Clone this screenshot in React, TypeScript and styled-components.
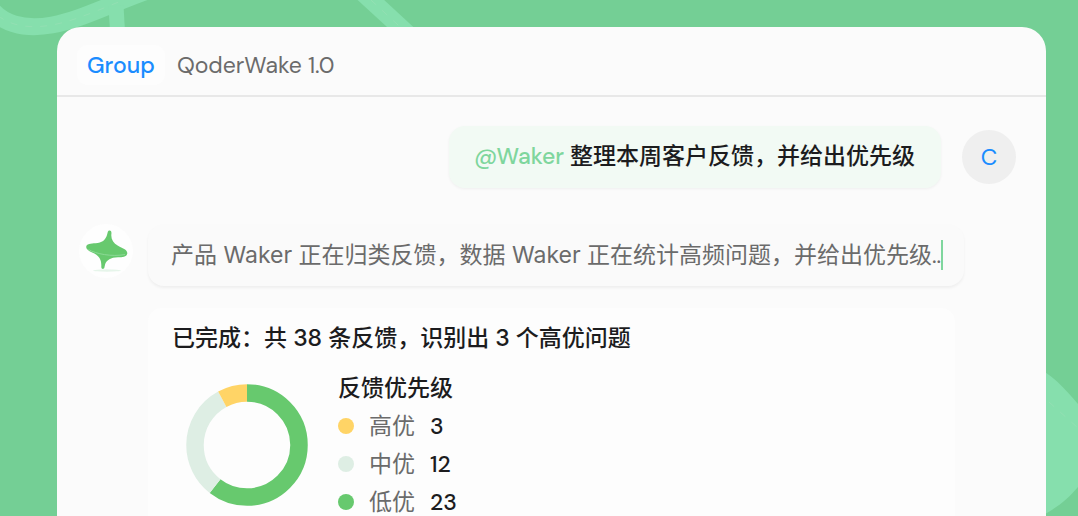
import React from "react";
import styled, { createGlobalStyle } from "styled-components";

const GlobalStyle = createGlobalStyle`
  *, *::before, *::after { box-sizing: border-box; }
  body {
    margin: 0;
    background: #74cf95;
    font-family: "DM Sans", Inter, "Noto Sans CJK SC", sans-serif;
    font-size: 23px;
    line-height: 32px;
    color: #1c1c1e;
  }
  h2, h3, p, ul { margin: 0; padding: 0; font-size: inherit; }
`;

const Page = styled.div`
  position: relative;
  display: flex;
  height: 100vh;
  padding: 27px 32px 0 57px;
  overflow: hidden;
`;

const Roads = styled.svg`
  position: absolute;
  top: 0;
  width: 440px;
  height: 516px;
  pointer-events: none;
`;

const RoadsLeft = styled(Roads)`
  left: 0;
`;

const RoadsRight = styled(Roads)`
  right: 0;
  width: 78px;
`;

const Panel = styled.main`
  position: relative;
  flex: 1;
  min-width: 0;
  background: #fbfbfb;
  border-radius: 24px 24px 0 0;
`;

const Header = styled.header`
  display: flex;
  align-items: center;
  gap: 12px;
  height: 70px;
  padding: 8px 20px 0;
  border-bottom: 2px solid #e8e8e8;
`;

const Tab = styled.button<{ $active?: boolean }>`
  padding: 4px ${(p) => (p.$active ? 10 : 0)}px;
  border: 0;
  border-radius: 10px;
  background: ${(p) => (p.$active ? "#fdfdfd" : "transparent")};
  color: ${(p) => (p.$active ? "#1a8cff" : "#6b6b6b")};
  font-family: inherit;
  font-size: 23px;
  font-weight: ${(p) => (p.$active ? 500 : 400)};
  line-height: 32px;
`;

const Thread = styled.section`
  display: flex;
  flex-direction: column;
  padding: 29px 30px 0 22px;
`;

const UserRow = styled.div`
  display: flex;
  justify-content: flex-end;
  align-items: center;
  gap: 21px;
`;

const UserBubble = styled.p`
  padding: 14px 26px 16px 25px;
  border-radius: 16px;
  background: #f2faf4;
  box-shadow: 0 1px 3px rgba(0, 0, 0, 0.05);
  font-weight: 500;
  white-space: nowrap;
`;

const Mention = styled.span`
  color: #7fd69d;
`;

const Avatar = styled.div<{ $bg: string }>`
  display: flex;
  flex: none;
  align-items: center;
  justify-content: center;
  width: 54px;
  height: 54px;
  border-radius: 50%;
  background: ${(p) => p.$bg};
  color: #1a8cff;
`;

const AgentRow = styled.div`
  display: flex;
  align-items: flex-start;
  gap: 15px;
  margin-top: 36px;
`;

const AgentColumn = styled.div`
  display: flex;
  flex: 1;
  flex-direction: column;
  align-items: flex-start;
  gap: 22px;
  min-width: 0;
`;

const Reply = styled.p`
  display: flex;
  align-items: center;
  padding: 15px 21px 15px 23px;
  border-radius: 16px;
  background: #fafafa;
  box-shadow: 0 2px 3px rgba(0, 0, 0, 0.05);
  color: #6b6b6b;
  font-family: Inter, "Noto Sans CJK SC", sans-serif;
  white-space: nowrap;
`;

const TypingDots = styled.span`
  font-family: "DM Sans", Inter, sans-serif;
`;

const Caret = styled.span`
  width: 2px;
  height: 30px;
  background: #7fd69d;
`;

const Card = styled.article`
  align-self: stretch;
  margin-right: 61px;
  padding: 14px 24px 24px;
  border-radius: 14px;
  background: #fdfdfd;
`;

const CardTitle = styled.h2`
  font-family: Inter, "Noto Sans CJK SC", sans-serif;
  font-weight: 500;
  white-space: nowrap;
`;

const Summary = styled.div`
  display: flex;
  align-items: flex-start;
  gap: 30px;
  margin-top: 15px;
  padding-left: 14px;
`;

const Donut = styled.svg`
  flex: none;
  width: 122px;
  height: 122px;
  margin-top: 15px;
`;

const LegendTitle = styled.h3`
  font-weight: 500;
  line-height: 38px;
`;

const Legend = styled.ul`
  list-style: none;
`;

const LegendItem = styled.li`
  display: flex;
  align-items: center;
  gap: 15px;
  line-height: 38px;
  color: #6b6b6b;
`;

const Dot = styled.span<{ $color: string }>`
  width: 16px;
  height: 16px;
  border-radius: 50%;
  background: ${(p) => p.$color};
`;

const Count = styled.span`
  color: #1c1c1e;
  font-weight: 500;
`;

const priorities = [
  { label: "高优", count: 3, color: "#ffd466" },
  { label: "中优", count: 12, color: "#deeee4" },
  { label: "低优", count: 23, color: "#67c96e" },
];

function PriorityDonut() {
  const total = priorities.reduce((sum, p) => sum + p.count, 0);
  let start = 0;
  const arcs = [...priorities].reverse().map((p) => {
    const arc = { ...p, start };
    start += p.count;
    return arc;
  });
  return (
    <Donut viewBox="0 0 122 122" role="img" aria-label="反馈优先级">
      {arcs.map((a) => (
        <circle
          key={a.label}
          cx="61"
          cy="61"
          r="52"
          fill="none"
          stroke={a.color}
          strokeWidth="17.5"
          pathLength={total}
          strokeDasharray={`${a.count} ${total - a.count}`}
          strokeDashoffset={-a.start}
          transform="rotate(-90 61 61)"
        />
      ))}
    </Donut>
  );
}

function SpinningTop() {
  return (
    <svg width="54" height="54" viewBox="0 0 54 54" aria-hidden="true">
      <ellipse cx="28" cy="46.500" rx="14" ry="1.200" fill="#e6f5ea" />
      <path
        d="M30.500 6.500C32.300 6.500 32.600 8 32.400 9.800C31.800 15 34 18.500 39 21.800C42 23.800 48.200 25.200 48.300 29C48.300 32.500 44 33.300 39 33.300C31.500 33.500 28 36 26.200 40L25.400 43.500C25 45.600 22.300 45.400 22.300 43C22.500 38.500 22 34 17 30.500C13 28 7.200 26.500 7.200 23C7.200 19.800 12 19.500 16.500 19.300C23 19 26.500 16 28 11L28.700 8.300C29 7 29.600 6.500 30.500 6.500Z"
        fill="#67c96e"
      />
      <path d="M9.500 25.500C17 30 33 33 46 30.500" fill="none" stroke="#8bd995" strokeWidth="1" />
    </svg>
  );
}

export default function App() {
  return (
    <>
      <GlobalStyle />
      <Page>
        <RoadsLeft viewBox="0 0 440 516" aria-hidden="true">
          <g fill="none" stroke="#86dfad" strokeWidth="17">
            <path d="M-12 4C0 24 24 30 52 25C80 20 108 5 150 -10" />
            <path d="M116 6L118 40" strokeWidth="15" />
            <path d="M360 -10L410 36" strokeWidth="18" />
          </g>
          <g fill="none" stroke="#93e0b3" strokeWidth="1" strokeDasharray="7 8">
            <path d="M-12 4C0 24 24 30 52 25C80 20 108 5 150 -10" />
            <path d="M360 -10L410 36" />
          </g>
        </RoadsLeft>
        <RoadsRight viewBox="0 0 78 516" aria-hidden="true">
          <path d="M30 364C52 373 65 389 78 404V487C66 501 56 509 30 522Z" fill="#86dfad" />
          <path d="M49 402L78 428" fill="none" stroke="#93e0b3" strokeDasharray="7 8" />
        </RoadsRight>
        <Panel>
          <Header>
            <Tab type="button" $active>Group</Tab>
            <Tab type="button">QoderWake 1.0</Tab>
          </Header>
          <Thread>
            <UserRow>
              <UserBubble>
                <Mention>@Waker</Mention> 整理本周客户反馈，并给出优先级
              </UserBubble>
              <Avatar $bg="#efefef">C</Avatar>
            </UserRow>
            <AgentRow>
              <Avatar $bg="#fefefe">
                <SpinningTop />
              </Avatar>
              <AgentColumn>
                <Reply>
                  产品 Waker 正在归类反馈，数据 Waker 正在统计高频问题，并给出优先级
                  <TypingDots>..</TypingDots>
                  <Caret />
                </Reply>
                <Card>
                  <CardTitle>已完成：共 38 条反馈，识别出 3 个高优问题</CardTitle>
                  <Summary>
                    <PriorityDonut />
                    <div>
                      <LegendTitle>反馈优先级</LegendTitle>
                      <Legend>
                        {priorities.map((p) => (
                          <LegendItem key={p.label}>
                            <Dot $color={p.color} />
                            <span>{p.label}</span>
                            <Count>{p.count}</Count>
                          </LegendItem>
                        ))}
                      </Legend>
                    </div>
                  </Summary>
                </Card>
              </AgentColumn>
            </AgentRow>
          </Thread>
        </Panel>
      </Page>
    </>
  );
}
